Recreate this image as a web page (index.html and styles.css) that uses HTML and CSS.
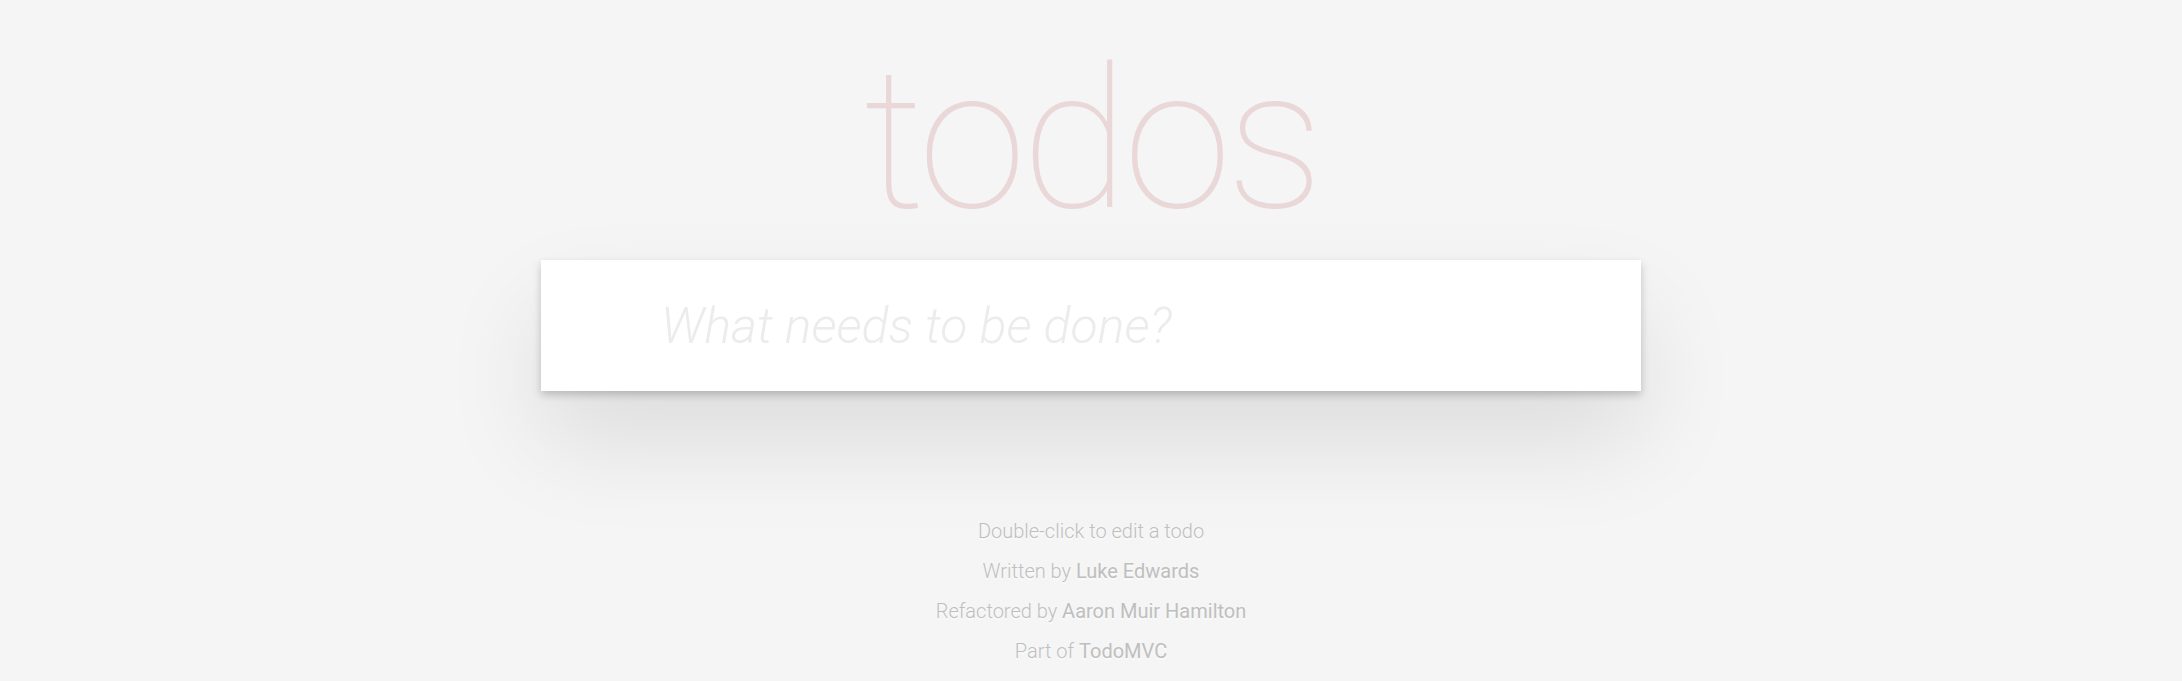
FILE: index.html
```html
<!DOCTYPE html>
<html lang="en">
<head>
<meta charset="utf-8">
<title>Todos</title>
<link rel="stylesheet" href="styles.css">
</head>
<body>
<div class="page">
  <section class="todoapp">
    <header class="header">
      <h1 class="title">todos</h1>
    </header>
    <div class="main">
      <input class="new-todo" type="text" placeholder="What needs to be done?">
    </div>
  </section>
  <footer class="info">
    <p>Double-click to edit a todo</p>
    <p>Written by <a href="#">Luke Edwards</a></p>
    <p>Refactored by <a href="#">Aaron Muir Hamilton</a></p>
    <p>Part of <a href="#">TodoMVC</a></p>
  </footer>
</div>
</body>
</html>
```
FILE: styles.css
```css
html, body {
  margin: 0;
  padding: 0;
  background: #f5f5f5;
}
body {
  font-family: "Roboto", "Liberation Sans", sans-serif;
  font-weight: 300;
  font-size: 28px;
  color: #111;
}
.page {
  width: 1100px;
  margin: 0 auto;
}
.header {
  height: 260px;
}
.title {
  margin: 0;
  padding: 40px 0 0 0;
  font-size: 196px;
  line-height: 200px;
  font-weight: 100;
  text-align: center;
  letter-spacing: -5px;
  color: rgba(175, 47, 47, 0.15);
}
.main {
  position: relative;
  background: #fff;
  box-shadow: 0 4px 8px 0 rgba(0, 0, 0, 0.2), 0 50px 100px 0 rgba(0, 0, 0, 0.1);
}
.new-todo {
  display: block;
  width: 100%;
  box-sizing: border-box;
  margin: 0;
  border: 0;
  outline: none;
  padding: 32px 32px 32px 120px;
  font-family: inherit;
  font-size: 50px;
  line-height: 67px;
  height: 131px;
  background: transparent;
  color: #4d4d4d;
}
.new-todo::placeholder {
  font-style: italic;
  font-weight: 300;
  color: #ececec;
}
.info {
  margin: 130px auto 0;
  color: #bfbfbf;
  font-size: 20px;
  text-align: center;
  text-shadow: 0 2px 0 rgba(255, 255, 255, 0.5);
}
.info p {
  margin: 20px 0;
  line-height: 1;
}
.info a {
  color: inherit;
  text-decoration: none;
  font-weight: 400;
}
```
